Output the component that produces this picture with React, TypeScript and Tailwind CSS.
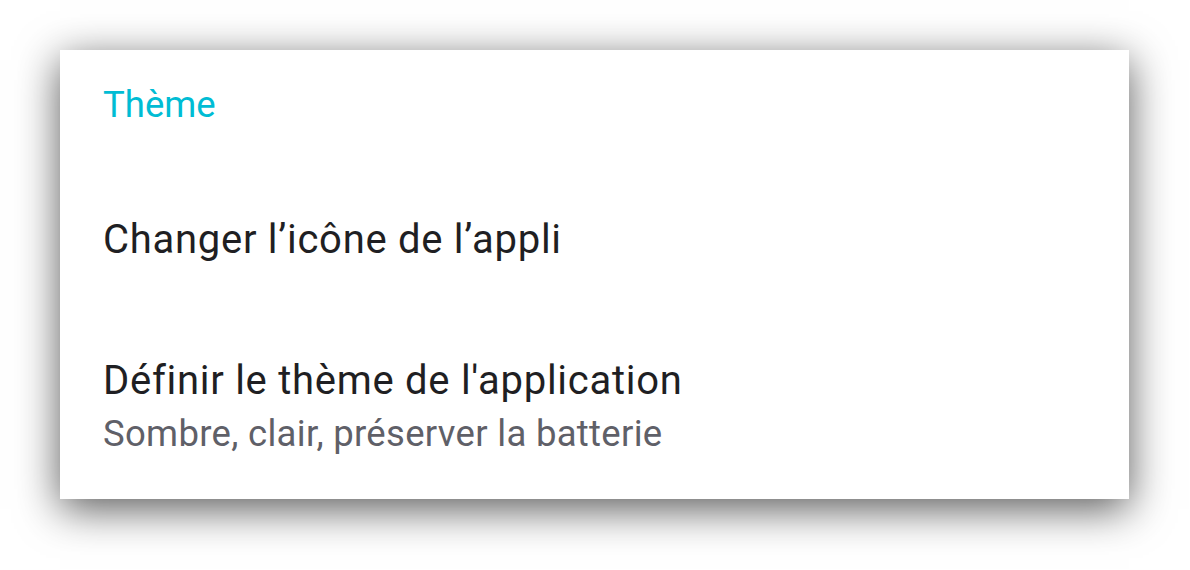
import React from 'react';

export default function App() {
  const rows = [
    { title: 'Changer l’icône de l’appli' },
    { title: "Définir le thème de l'application", subtitle: 'Sombre, clair, préserver la batterie' },
  ];

  return (
    <div className="w-[1190px] h-[570px] bg-white pt-[50px] pl-[60px]" style={{ fontFamily: 'Roboto, sans-serif' }}>
      {/* Settings card */}
      <div className="w-[1069px] h-[449px] bg-white shadow-[0_10px_40px_rgba(0,0,0,0.65)] pl-[43px] pt-[33px]">
        <h2 className="text-[36.5px] leading-[44px] text-[#00bcd4]">Thème</h2>

        <div className="mt-[89px]">
          <p className="text-[40px] leading-[48px] tracking-[0.72px] text-[#1f1f23]">{rows[0].title}</p>
        </div>

        <div className="mt-[93px]">
          <p className="text-[40px] leading-[48px] tracking-[0.72px] text-[#1f1f23]">{rows[1].title}</p>
          <p className="mt-[7px] text-[36.5px] leading-[44px] tracking-[0.3px] text-[#5f6068]">{rows[1].subtitle}</p>
        </div>
      </div>
    </div>
  );
}
